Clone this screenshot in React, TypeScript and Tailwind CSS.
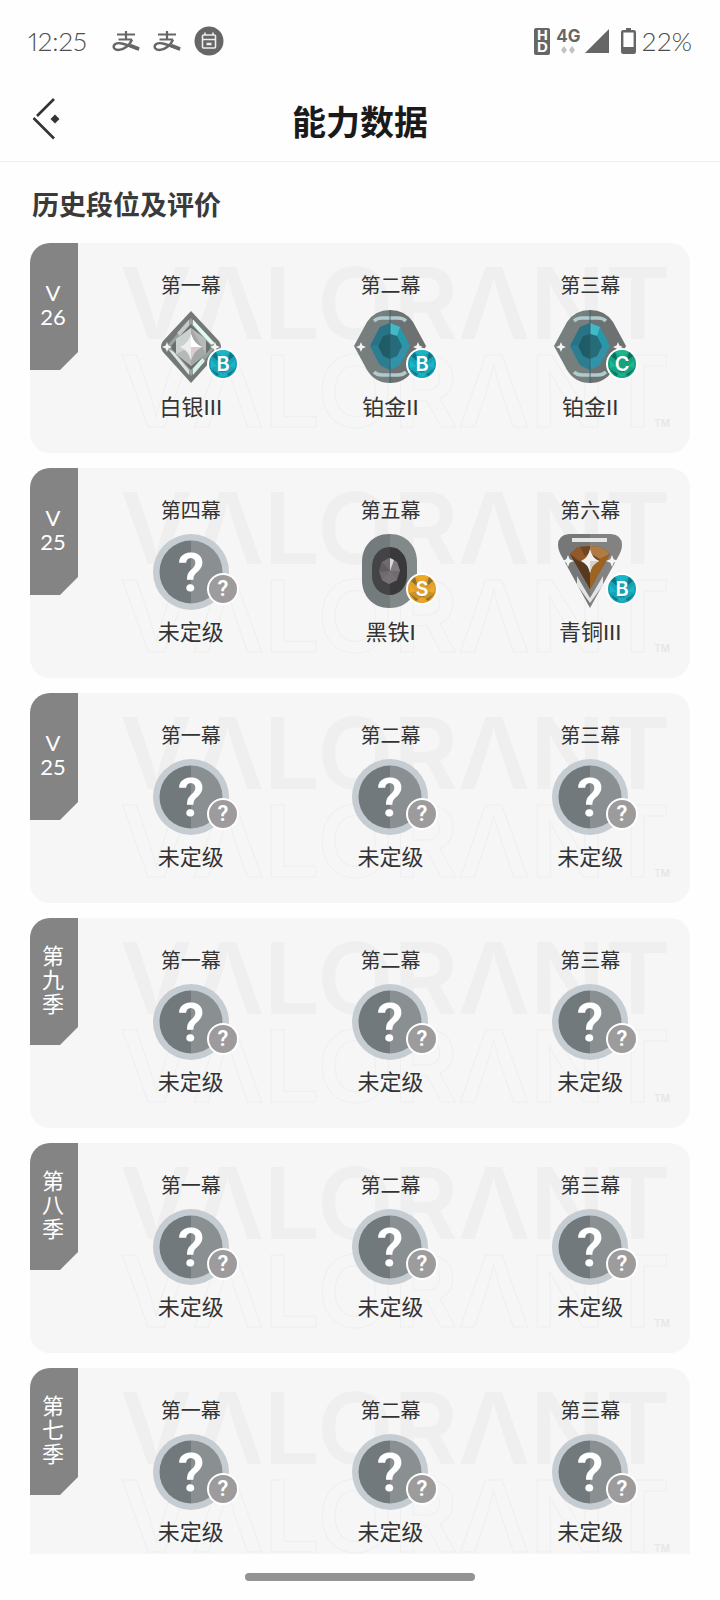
import type { ReactNode } from "react";

type Rank = "silver" | "platinum" | "iron" | "bronze" | "none";
type Grade = "B" | "C" | "S" | "?";
type Act = { name: string; rank: Rank; label: string; grade: Grade };
type Season = { id: string; tab: string[]; acts: Act[] };

const unranked = (name: string): Act => ({ name, rank: "none", label: "未定级", grade: "?" });
const firstThree = () => ["第一幕", "第二幕", "第三幕"].map(unranked);

const seasons: Season[] = [
  {
    id: "v26",
    tab: ["V", "26"],
    acts: [
      { name: "第一幕", rank: "silver", label: "白银III", grade: "B" },
      { name: "第二幕", rank: "platinum", label: "铂金II", grade: "B" },
      { name: "第三幕", rank: "platinum", label: "铂金II", grade: "C" },
    ],
  },
  {
    id: "v25b",
    tab: ["V", "25"],
    acts: [
      unranked("第四幕"),
      { name: "第五幕", rank: "iron", label: "黑铁I", grade: "S" },
      { name: "第六幕", rank: "bronze", label: "青铜III", grade: "B" },
    ],
  },
  { id: "v25a", tab: ["V", "25"], acts: firstThree() },
  { id: "s9", tab: ["第", "九", "季"], acts: firstThree() },
  { id: "s8", tab: ["第", "八", "季"], acts: firstThree() },
  { id: "s7", tab: ["第", "七", "季"], acts: firstThree() },
];

function Sparkle({ x, y, r, fill = "#f4f5f5" }: { x: number; y: number; r: number; fill?: string }) {
  const k = r * 0.28;
  return (
    <path
      fill={fill}
      d={`M${x} ${y - r}L${x + k} ${y - k}L${x + r} ${y}L${x + k} ${y + k}L${x} ${y + r}L${x - k} ${y + k}L${x - r} ${y}L${x - k} ${y - k}Z`}
    />
  );
}

const rankArt: Record<Rank, ReactNode> = {
  silver: (
    <>
      <path d="M38 2 66 32q4 6 0 11L38 74 10 43q-4-5 0-11Z" fill="#747977" />
      <path d="M38 9 63 38 38 67 13 38Z" fill="#99a09d" />
      <path d="M40 10.500 62 34.500l-4 1L40 16Z" fill="#e2fbf2" />
      <path d="M36 10.500 24 24l3 3 9-10.500Z" fill="#c3cac7" />
      <path d="M15 40 36 66v-5L21 43Z" fill="#dbe5e1" />
      <path d="M40 66 52 52l-3-3-9 10.500Z" fill="#d5f3e8" />
      <path d="M38 15 59 38 38 61 17 38Z" fill="#6c706d" />
      <path d="M38 19 53 30v15L38 57 23 45V30Z" fill="#b5b9b7" />
      <path d="M38 19 23 30v15l15-7Z" fill="#cbd1ce" />
      <path d="M38 19v38l15-12Z" fill="#a3a7a5" />
      <path d="M38 25q3 10 11 13-8 3-11 13-3-10-11-13 8-3 11-13Z" fill="#efecec" />
      <path d="M38 25q3 10 11 13H38Z" fill="#fff" />
      <path d="M38 38h11q-8 3-11 13Z" fill="#d6cccd" />
      <Sparkle x={14} y={38} r={5} />
      <Sparkle x={62} y={38} r={5} />
    </>
  ),
  platinum: (
    <>
      <path d="M2 37 15 13Q23 1 38 1v73Q23 74 15 61Z" fill="#777e7e" />
      <path d="M74 37 61 13Q53 1 38 1v73Q53 74 61 61Z" fill="#6d7172" />
      <path d="M22 12q3-3 8-3h16q5 0 8 3M22 63q3 3 8 3h16q5 0 8-3" fill="none" stroke="#b0cbcd" strokeWidth="3.500" />
      <path d="M18 37 28 18l10-4 10 4 10 19-10 19-10 5-10-5Z" fill="#32849a" />
      <path d="M38 14 28 18 18 37l8-1 5-9 7-2Z" fill="#287486" />
      <path d="M38 14v11l7 2 5 10h8L48 18Z" fill="#2798aa" />
      <path d="M38 14l10 4-3 9-7-2Z" fill="#45b8c6" />
      <path d="M18 37l10 19 10 5V49l-7-2-5-11Z" fill="#2b7d90" />
      <path d="M58 37 48 56l-10 5V49l7-2 6-11Z" fill="#3292a7" />
      <path d="M38 25l-7 2-5 10 5 10 7 3Z" fill="#205b68" />
      <path d="M38 25l7 2 5 10-5 10-7 3Z" fill="#266b7a" />
      <path d="M38 1v73" stroke="#315c65" strokeWidth=".8" />
      <Sparkle x={9} y={38} r={5} />
      <Sparkle x={66} y={38} r={5} />
    </>
  ),
  iron: (
    <>
      <path d="M38 0h-1C20 0 10 13 10 28v18c0 16 11 28 27 28h1Z" fill="#747b7c" />
      <path d="M38 0c17 0 27 13 27 28v18c0 16-11 28-27 28Z" fill="#828989" />
      <path d="M38 13c-11 0-18 9-18 20v9c0 11 8 19 18 19Z" fill="#444447" />
      <path d="M38 13c10 0 17 9 17 20v9c0 11-8 19-17 19Z" fill="#39393c" />
      <path d="M37 24l-7 4-3 9 3 9 7 4 8-4 3-9-3-9Z" fill="#6f6b71" />
      <path d="M38 37V24l7 4 3 9Z" fill="#817b80" />
      <path d="M38 37V24l4 2Z" fill="#ddd7da" />
      <path d="M38 37 27 38l3-10Z" fill="#605c62" />
      <path d="M38 37l7 9-8 4-7-4Z" fill="#777177" />
    </>
  ),
  bronze: (
    <>
      <path d="M38 0H17Q6 1 6 11q0 5 4 12l28 51Z" fill="#767777" />
      <path d="M38 0h21q11 1 11 11 0 5-4 12L38 74Z" fill="#838280" />
      <path d="M20 4h35v4H20Z" fill="#e4e7e6" />
      <path d="M25 42l13 22 13-22v9L38 69 25 51Z" fill="#e3e4e5" />
      <path d="M18 20l8-7 12-1 12 1 8 7-20 35Z" fill="#774b22" />
      <path d="M26 13 38 12v7l-8 9-12-8Z" fill="#94592a" />
      <path d="M38 12l12 1 8 7-10 5-10-6Z" fill="#b07b42" />
      <path d="M38 31l12-7 8-4-20 35Z" fill="#9c6420" />
      <path d="M38 55V31L24 26l-6-6Z" fill="#57391f" />
      <path d="M28 13l10-1v8l-5 2Z" fill="#6e4725" />
      <path d="M38 15q2 9 9 12-7 3-9 12-2-9-9-12 7-3 9-12Z" fill="#f3f1ef" />
      <path d="M38 27h9q-7 3-9 12Z" fill="#d5d1cc" />
      <Sparkle x={16} y={27} r={6} />
      <Sparkle x={60} y={27} r={6} />
    </>
  ),
  none: (
    <>
      <circle cx="38" cy="38" r="38" fill="#c5ccd2" />
      <path d="M38 6.500a31.500 31.500 0 0 0 0 63Z" fill="#71797c" />
      <path d="M38 6.500a31.500 31.500 0 0 1 0 63Z" fill="#8a9092" />
      <text x="38" y="57" textAnchor="middle" fill="#fff" fontSize="54" fontWeight="600" fontFamily="Roboto, sans-serif">
        ?
      </text>
    </>
  ),
};

const gradeColors: Record<Grade, [string, string, string]> = {
  B: ["#16a3b5", "#0e7588", "#20c3d0"],
  C: ["#14a27f", "#0b6f5c", "#22c596"],
  S: ["#e0a02a", "#8f6d2a", "#f3ad24"],
  "?": ["#9d9b9b", "#9d9b9b", "#9d9b9b"],
};

function GradeBadge({ grade }: { grade: Grade }) {
  const [base, dark, light] = gradeColors[grade];
  return (
    <svg viewBox="0 0 32 32" className="absolute -right-2.5 bottom-[5px] size-8" role="img" aria-label={grade}>
      <circle cx="16" cy="16" r="16" fill="#fff" />
      <circle cx="16" cy="16" r="14" fill={base} />
      {grade !== "?" && (
        <>
          <path d="M5 8l7 6L9 4Z M27 8l-7 6 3-10Z M3 20l9-2 4 5-6 5Z M29 20l-9-2-4 5 6 5Z" fill={dark} />
          <path d="M9 4l7 5 7-5q-7-4-14 0Z M4 12l7 7 5 8 5-8 7-7v9l-12 8-12-8Z" fill={light} opacity=".6" />
        </>
      )}
      <text
        x="16"
        y="23"
        textAnchor="middle"
        fill="#fff"
        fontSize={grade === "?" ? 22 : 20}
        fontWeight="600"
        fontFamily={grade === "?" ? "Roboto, sans-serif" : "Inter, sans-serif"}
      >
        {grade}
      </text>
    </svg>
  );
}

function Watermark() {
  return (
    <div
      aria-hidden="true"
      className="pointer-events-none absolute inset-y-0 left-[90px] right-4 flex flex-col pt-4 font-[Inter,sans-serif] text-[99px] leading-[88px] font-semibold whitespace-nowrap select-none"
    >
      <span className="text-[#efefef]">VΛLORΛNT</span>
      <span className="text-transparent [-webkit-text-stroke:1px_#efefef]">VΛLORΛNT</span>
      <span className="absolute right-1 bottom-6 text-[10px] leading-3 text-[#e6e6e6]">TM</span>
    </div>
  );
}

function SeasonCard({ season }: { season: Season }) {
  return (
    <li className="relative flex shrink-0 items-start overflow-hidden rounded-[20px] bg-[#f6f6f6]">
      <Watermark />
      <h3 className="relative flex h-[127px] w-12 flex-col items-center justify-center bg-[#848484] pr-0.5 pb-1 text-[22px] leading-6 font-normal text-white [clip-path:polygon(0_0,100%_0,100%_109px,30px_100%,0_100%)]">
        {season.tab.map((t) => (
          <span key={t}>{t}</span>
        ))}
      </h3>
      <ul className="relative ml-[13px] grid flex-1 grid-cols-3 pt-7 pb-8">
        {season.acts.map((act) => (
          <li key={act.name} className="flex flex-col items-center text-[#333333]">
            <span className="text-[20px] leading-7">{act.name}</span>
            <span className="relative mt-2.5 mb-2 block size-[76px]">
              <svg viewBox="0 0 76 76" className="size-full" aria-hidden="true">
                {rankArt[act.rank]}
              </svg>
              <GradeBadge grade={act.grade} />
            </span>
            <span className="text-[22px] leading-7">{act.label}</span>
          </li>
        ))}
      </ul>
    </li>
  );
}

function PayIcon() {
  return (
    <svg viewBox="0 0 28 24" className="h-6 w-7" fill="none" stroke="#666666" aria-hidden="true">
      <path d="M5 5.500h18M14 2v8M6.500 10.500H20" strokeWidth="2.200" />
      <path d="M20 10.500C18 16 12 21 6.500 21 2.500 21 1 18.500 2 16.300 4.500 12 12 14.500 27 20.500" strokeWidth="2.400" />
      <path d="M18 16.500 27 20" strokeWidth="3.500" />
    </svg>
  );
}

function StatusBar() {
  return (
    <div className="flex h-[82px] shrink-0 items-center justify-between px-7 text-[26px] leading-8 font-light text-[#4d4d4d]">
      <div className="flex items-center">
        <time className="w-[84px] proportional-nums">12:25</time>
        <span className="flex items-center gap-[13px]">
          <PayIcon />
          <PayIcon />
          <svg viewBox="0 0 30 30" className="size-[30px]" aria-hidden="true">
            <circle cx="15" cy="15" r="14.500" fill="#666666" />
            <g fill="none" stroke="#eeeeee" strokeWidth="1.600">
              <rect x="8.500" y="9" width="13" height="13" rx="1" />
              <path d="M11 6.500V9M19 6.500V9M8.500 13.500h13" />
              <path d="M12.500 18h5" strokeWidth="2.500" />
            </g>
          </svg>
        </span>
      </div>
      <div className="flex items-center">
        <span className="flex h-[27px] w-4 flex-col items-center justify-center rounded-[2px] bg-[#666666] font-['Liberation_Sans',sans-serif] text-[15px] leading-3 font-bold text-white">
          <span>H</span>
          <span>D</span>
        </span>
        <span className="ml-1.5 flex flex-col items-center">
          <span className="font-[Inter,sans-serif] text-[17px] leading-4 font-bold text-[#666666]">4G</span>
          <svg viewBox="0 0 14 8" className="mt-0.5 h-2 w-3.5" fill="#c2c2c2" aria-hidden="true">
            <path d="M3 0l3 4-3 4-3-4ZM11 0l3 4-3 4-3-4Z" />
          </svg>
        </span>
        <svg viewBox="0 0 24 24" className="ml-1 size-6" fill="#666666" aria-hidden="true">
          <path d="M24 0v24H0Z" />
        </svg>
        <svg viewBox="0 0 15 26" className="ml-3 h-[26px] w-[15px]" aria-hidden="true">
          <path d="M5 0h5v3H5Z" fill="#666666" />
          <rect x="1.200" y="3.200" width="12.600" height="21.600" rx="1" fill="#fff" stroke="#666666" strokeWidth="2.400" />
          <path d="M1 19h13v6H1Z" fill="#666666" />
        </svg>
        <span className="ml-1.5">22%</span>
      </div>
    </div>
  );
}

export default function App() {
  return (
    <div className="flex h-screen flex-col bg-[#fefefe] font-[Lato,'Noto_Sans_CJK_SC',sans-serif]">
      <StatusBar />
      <header className="grid h-20 shrink-0 grid-cols-[64px_1fr_64px] items-center border-b border-[#efefef]">
        <button type="button" aria-label="返回" className="flex h-full items-center pb-1.5 pl-8">
          <svg viewBox="0 0 28 42" className="h-[42px] w-7" fill="none" stroke="#333333" strokeWidth="2.600" aria-hidden="true">
            <path d="M22 1 5 18M1.500 20 22 40.500" />
            <path d="M23 16.500l4.500 4.500-4.500 4.500-4.500-4.500Z" fill="#333333" stroke="none" />
          </svg>
        </button>
        <h1 className="text-center text-[34px] leading-10 font-bold text-[#1a1a1a]">能力数据</h1>
      </header>
      <main className="flex min-h-0 flex-1 flex-col overflow-y-auto px-[30px] pt-[25px] [scrollbar-width:none]">
        <h2 className="pl-0.5 text-[27px] leading-9 font-bold text-[#3a3a3a]">历史段位及评价</h2>
        <ul className="mt-5 flex flex-col gap-[15px]">
          {seasons.map((s) => (
            <SeasonCard key={s.id} season={s} />
          ))}
        </ul>
      </main>
      <footer className="flex h-[46px] shrink-0 items-center justify-center">
        <span className="h-2 w-[230px] rounded-full bg-[#939393]" />
      </footer>
    </div>
  );
}
